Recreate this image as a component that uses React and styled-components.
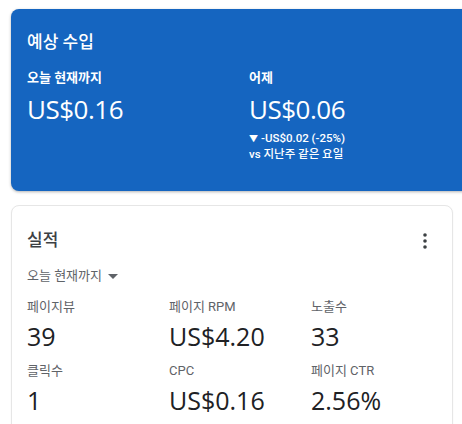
import React from 'react';
import styled, { createGlobalStyle } from 'styled-components';

const Global = createGlobalStyle`
  html, body { margin: 0; padding: 0; background: #fff; overflow: hidden; }
  body { font-family: Roboto, "Noto Sans CJK KR", sans-serif; }
`;

const Page = styled.div`
  padding: 9px 0 0 11px;
  display: flex;
  flex-direction: column;
  gap: 14px;
`;

const EarningsCard = styled.section`
  width: 480px;
  height: 182px;
  box-sizing: border-box;
  background: #1565c0;
  border-radius: 8px;
  box-shadow: 0 1px 3px rgba(0, 0, 0, 0.3);
  color: #fff;
  padding: 21px 16px 0;
`;

const CardTitle = styled.h2`
  margin: 0;
  font-size: 17px;
  font-weight: 500;
  line-height: 24px;
  color: ${p => (p.$light ? '#fff' : '#3c4043')};
`;

const EarnRow = styled.div`
  display: grid;
  grid-template-columns: 222px 1fr;
  margin-top: 15px;
`;

const EarnLabel = styled.div`
  font-size: 13px;
  font-weight: 700;
  line-height: 18px;
`;

const EarnValue = styled.div`
  font-family: "Open Sans", Roboto, sans-serif;
  font-size: 26px;
  line-height: 36px;
  margin-top: 4px;
  letter-spacing: -0.5px;
`;

const Delta = styled.div`
  font-size: 11.5px;
  font-weight: 500;
  line-height: 15px;
  margin-top: 4px;
`;

const Arrow = styled.span`
  font-size: 9px;
  margin-right: 3px;
`;

const PerfCard = styled.section`
  width: 442px;
  height: 240px;
  box-sizing: border-box;
  background: #fff;
  border: 1px solid #e6e6e6;
  border-radius: 8px;
  box-shadow: 0 1px 2px rgba(0, 0, 0, 0.06);
  padding: 22px 15px 0;
`;

const Header = styled.div`
  display: flex;
  justify-content: space-between;
  align-items: center;
`;

const Kebab = styled.button`
  border: 0;
  background: none;
  padding: 0;
  margin: 2px 10px 0 0;
  display: flex;
  color: #3c4043;
`;

const RangePicker = styled.div`
  display: flex;
  align-items: center;
  gap: 6px;
  margin-top: 15px;
  font-size: 13px;
  color: #5f6368;
  line-height: 18px;
`;

const Caret = styled.span`
  width: 0;
  height: 0;
  border-left: 5px solid transparent;
  border-right: 5px solid transparent;
  border-top: 5px solid #5f6368;
`;

const Metrics = styled.div`
  display: grid;
  grid-template-columns: repeat(3, 142px);
  row-gap: 9px;
  margin-top: 13px;
`;

const MetricLabel = styled.div`
  font-size: 13px;
  color: #5f6368;
  line-height: 18px;
`;

const MetricValue = styled.div`
  font-family: "Open Sans", Roboto, sans-serif;
  font-size: 25px;
  color: #202124;
  line-height: 34px;
  margin-top: 3px;
`;

const metrics = [
  { label: '페이지뷰', value: '39' },
  { label: '페이지 RPM', value: 'US$4.20' },
  { label: '노출수', value: '33' },
  { label: '클릭수', value: '1' },
  { label: 'CPC', value: 'US$0.16' },
  { label: '페이지 CTR', value: '2.56%' },
];

export default function App() {
  return (
    <>
      <Global />
      <Page>
        <EarningsCard>
          <CardTitle $light>예상 수입</CardTitle>
          <EarnRow>
            <div>
              <EarnLabel>오늘 현재까지</EarnLabel>
              <EarnValue>US$0.16</EarnValue>
            </div>
            <div>
              <EarnLabel>어제</EarnLabel>
              <EarnValue>US$0.06</EarnValue>
              <Delta>
                <Arrow>▼</Arrow>-US$0.02 (-25%)
                <br />
                vs 지난주 같은 요일
              </Delta>
            </div>
          </EarnRow>
        </EarningsCard>
        <PerfCard>
          <Header>
            <CardTitle>실적</CardTitle>
            <Kebab aria-label="더보기">
              <svg width="4" height="16" viewBox="0 0 4 16">
                <circle cx="2" cy="2" r="1.8" fill="currentColor" />
                <circle cx="2" cy="8" r="1.8" fill="currentColor" />
                <circle cx="2" cy="14" r="1.8" fill="currentColor" />
              </svg>
            </Kebab>
          </Header>
          <RangePicker>
            오늘 현재까지 <Caret />
          </RangePicker>
          <Metrics>
            {metrics.map(m => (
              <div key={m.label}>
                <MetricLabel>{m.label}</MetricLabel>
                <MetricValue>{m.value}</MetricValue>
              </div>
            ))}
          </Metrics>
        </PerfCard>
      </Page>
    </>
  );
}
